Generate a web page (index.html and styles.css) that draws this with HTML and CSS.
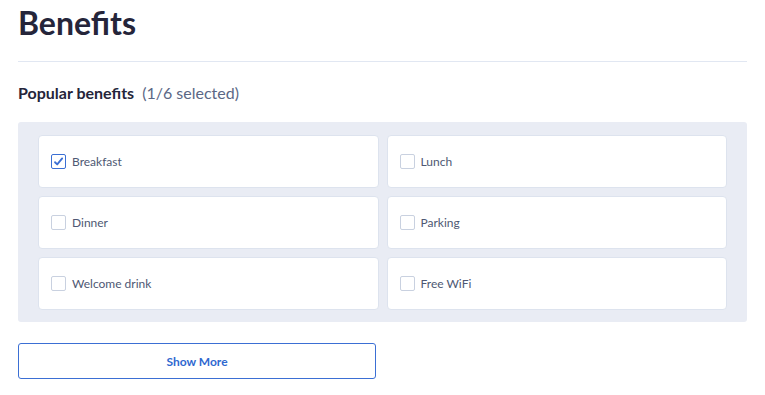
FILE: index.html
```html
<!DOCTYPE html>
<html lang="en">
  <head>
    <meta charset="UTF-8" />
    <meta name="viewport" content="width=device-width, initial-scale=1.0" />
    <title>Benefits</title>
    <link rel="stylesheet" href="styles.css">
  </head>
  <body>
    <div class="page">
      <h1 class="page-title">Benefits</h1>

      <div class="section-head">
        <span class="section-title">Popular benefits</span>
        <span class="section-count">(1/6 selected)</span>
      </div>

      <!-- Benefit options -->
      <div class="benefit-panel">
        <label class="benefit-card">
          <span class="check checked">
            <svg viewBox="0 0 12 12" width="11" height="11">
              <path d="M2.2 6.8 L4.6 9.2 L10 2.6" fill="none" stroke="#3b6fd4" stroke-width="2" stroke-linecap="round" stroke-linejoin="round" />
            </svg>
          </span>
          <span class="benefit-name">Breakfast</span>
        </label>
        <label class="benefit-card">
          <span class="check"></span>
          <span class="benefit-name">Lunch</span>
        </label>
        <label class="benefit-card">
          <span class="check"></span>
          <span class="benefit-name">Dinner</span>
        </label>
        <label class="benefit-card">
          <span class="check"></span>
          <span class="benefit-name">Parking</span>
        </label>
        <label class="benefit-card">
          <span class="check"></span>
          <span class="benefit-name">Welcome drink</span>
        </label>
        <label class="benefit-card">
          <span class="check"></span>
          <span class="benefit-name">Free WiFi</span>
        </label>
      </div>

      <button class="more-button">Show More</button>
    </div>
  </body>
</html>
```

FILE: styles.css
```css
* {
  margin: 0;
  padding: 0;
  box-sizing: border-box;
  font-family: 'Lato', 'Liberation Sans', sans-serif;
}

html,
body {
  width: 100%;
  height: 100%;
  background-color: #ffffff;
}

.page {
  padding: 0 18px;
}

.page-title {
  font-size: 32px;
  font-weight: 700;
  color: #25253a;
  line-height: 46px;
  height: 62px;
  border-bottom: 1px solid #e1e7f2;
}

.section-head {
  display: flex;
  align-items: baseline;
  gap: 8px;
  margin-top: 19px;
  line-height: 24px;
}

.section-title {
  font-size: 16px;
  font-weight: 700;
  color: #25253a;
}

.section-count {
  font-size: 16px;
  color: #5b6785;
}

.benefit-panel {
  display: grid;
  grid-template-columns: 1fr 1fr;
  gap: 8px;
  margin-top: 17px;
  padding: 13px 20px 12px;
  background-color: #e9ecf4;
  border-radius: 3px;
}

.benefit-card {
  display: flex;
  align-items: center;
  gap: 6px;
  height: 53px;
  padding: 0 12px;
  background-color: #ffffff;
  border: 1px solid #dde3ee;
  border-radius: 4px;
}

.check {
  display: flex;
  align-items: center;
  justify-content: center;
  width: 15px;
  height: 15px;
  border: 1px solid #c9d1e0;
  border-radius: 2px;
  background-color: #ffffff;
}

.check.checked {
  border-color: #3b6fd4;
}

.benefit-name {
  font-size: 12px;
  color: #4e5873;
}

.more-button {
  display: block;
  width: 358px;
  height: 36px;
  margin-top: 21px;
  background-color: #ffffff;
  border: 1px solid #3b6fd4;
  border-radius: 3px;
  color: #2f68d0;
  font-size: 12px;
  font-weight: 700;
  cursor: pointer;
}
```
